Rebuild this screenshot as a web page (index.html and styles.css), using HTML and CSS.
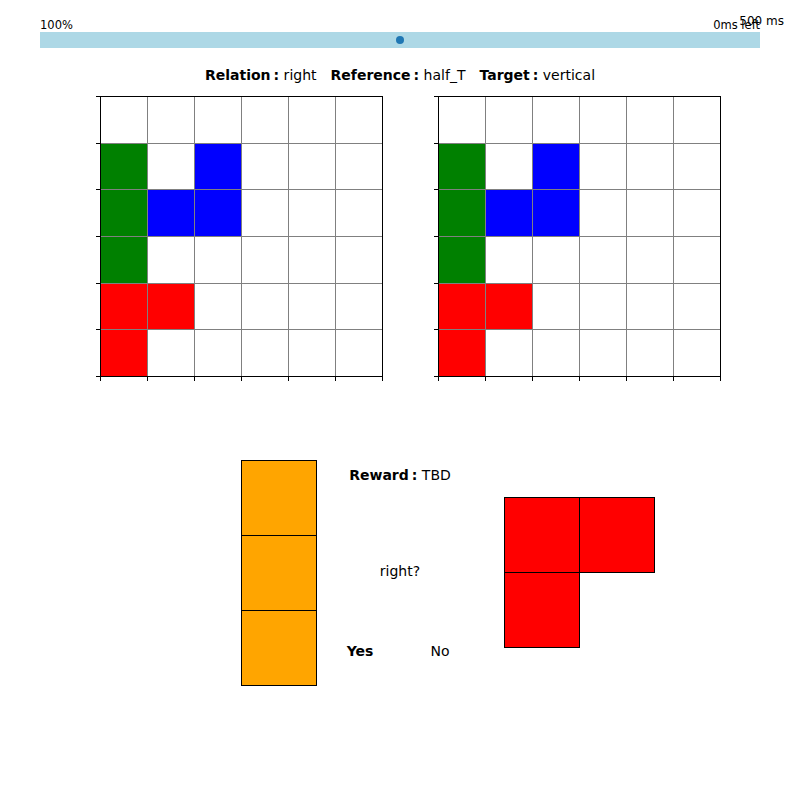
FILE: index.html
```html
<!DOCTYPE html>
<html>
<head>
<meta charset="utf-8">
<link rel="stylesheet" href="styles.css">
</head>
<body>
<div class="header">
  <span>100%</span>
  <span>0ms left</span>
  <span class="timer">500 ms</span>
</div>
<div class="bar"><div class="dot"></div></div>
<div class="title">
  <span><b>Relation<span class="colon">:</span></b> right</span>
  <span><b>Reference<span class="colon">:</span></b> half_T</span>
  <span><b>Target<span class="colon">:</span></b> vertical</span>
</div>
<div class="boards">
  <div class="plot">
    <div class="yticks"><span></span><span></span><span></span><span></span><span></span><span></span><span></span></div>
    <div class="board-col">
      <div class="board">
        <div></div><div></div><div></div><div></div><div></div><div></div>
        <div class="g"></div><div></div><div class="b"></div><div></div><div></div><div></div>
        <div class="g"></div><div class="b"></div><div class="b"></div><div></div><div></div><div></div>
        <div class="g"></div><div></div><div></div><div></div><div></div><div></div>
        <div class="r"></div><div class="r"></div><div></div><div></div><div></div><div></div>
        <div class="r"></div><div></div><div></div><div></div><div></div><div></div>
      </div>
      <div class="xticks"><span></span><span></span><span></span><span></span><span></span><span></span><span></span></div>
    </div>
  </div>
  <div class="plot">
    <div class="yticks"><span></span><span></span><span></span><span></span><span></span><span></span><span></span></div>
    <div class="board-col">
      <div class="board">
        <div></div><div></div><div></div><div></div><div></div><div></div>
        <div class="g"></div><div></div><div class="b"></div><div></div><div></div><div></div>
        <div class="g"></div><div class="b"></div><div class="b"></div><div></div><div></div><div></div>
        <div class="g"></div><div></div><div></div><div></div><div></div><div></div>
        <div class="r"></div><div class="r"></div><div></div><div></div><div></div><div></div>
        <div class="r"></div><div></div><div></div><div></div><div></div><div></div>
      </div>
      <div class="xticks"><span></span><span></span><span></span><span></span><span></span><span></span><span></span></div>
    </div>
  </div>
</div>
<div class="bottom">
  <div class="stack">
    <div></div><div></div><div></div>
  </div>
  <div class="middle">
    <div class="reward"><b>Reward<span class="colon">:</span></b> TBD</div>
    <div class="question">right?</div>
    <div class="answers"><span class="yes">Yes</span><span class="no">No</span></div>
  </div>
  <div class="shape">
    <div></div><div></div><div></div>
  </div>
</div>
</body>
</html>
```
FILE: styles.css
```css
body {
  margin: 0;
  width: 800px;
  height: 800px;
  background: #fff;
  color: #000;
  font-family: "DejaVu Sans", sans-serif;
}

.header {
  position: relative;
  display: flex;
  justify-content: space-between;
  margin: 0 40px;
  padding-top: 18px;
  font-size: 11.5px;
  line-height: 14px;
}

.timer {
  position: absolute;
  right: -24px;
  top: 14px;
  font-size: 12px;
}

.bar {
  margin: 0 40px;
  height: 16px;
  background: #add8e6;
  display: flex;
  align-items: center;
  justify-content: center;
}

.dot {
  width: 8px;
  height: 8px;
  border-radius: 50%;
  background: #1f77b4;
}

.title {
  margin-top: 19px;
  display: flex;
  justify-content: center;
  gap: 14px;
  font-size: 14px;
  line-height: 17px;
  white-space: pre;
}

.colon {
  margin-left: 3px;
}

.boards {
  display: flex;
  margin-top: 12px;
  padding-left: 96px;
  gap: 51px;
}

.plot {
  display: flex;
}

.yticks {
  width: 4px;
  height: 281px;
  display: flex;
  flex-direction: column;
  justify-content: space-between;
}

.yticks span {
  height: 1px;
  background: #000;
}

.board-col {
  display: flex;
  flex-direction: column;
}

.board {
  box-sizing: border-box;
  width: 283px;
  height: 281px;
  border: 1px solid #000;
  background: #808080;
  display: grid;
  grid-template-columns: repeat(6, 46px);
  grid-template-rows: repeat(6, 1fr);
  gap: 1px;
}

.board div {
  background: #fff;
}

.board .g { background: #008000; }
.board .b { background: #0000ff; }
.board .r { background: #ff0000; }

.xticks {
  width: 283px;
  height: 4px;
  display: flex;
  justify-content: space-between;
}

.xticks span {
  width: 1px;
  height: 4px;
  background: #000;
}

.bottom {
  display: flex;
  align-items: flex-start;
  margin-top: 79px;
  padding-left: 241px;
}

.stack {
  display: grid;
  grid-template-rows: repeat(3, 75px);
  width: 76px;
}

.stack div,
.shape div {
  box-sizing: border-box;
  width: 76px;
  height: 76px;
  border: 1px solid #000;
}

.stack div {
  background: #ffa500;
}

.middle {
  width: 166px;
  height: 226px;
  display: flex;
  flex-direction: column;
  align-items: center;
  font-size: 14px;
  line-height: 17px;
}

.reward {
  margin-top: 7px;
}

.question {
  margin-top: 79px;
}

.answers {
  margin-top: 63px;
  display: flex;
}

.answers span {
  width: 80px;
  text-align: center;
}

.yes {
  font-weight: bold;
}

.shape {
  margin-left: 21px;
  margin-top: 37px;
  display: grid;
  grid-template-columns: repeat(2, 75px);
  grid-template-rows: repeat(2, 75px);
}

.shape div {
  background: #ff0000;
}
```
